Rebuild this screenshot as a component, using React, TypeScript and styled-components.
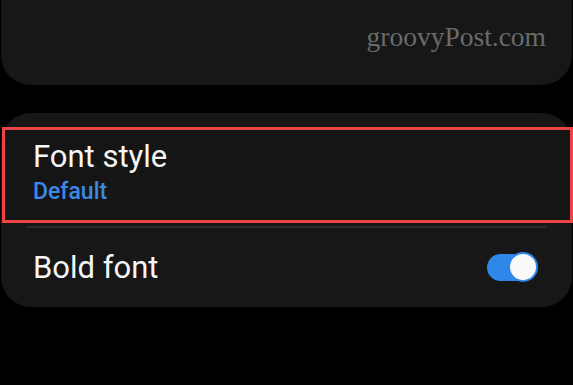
import styled, { createGlobalStyle } from "styled-components";

const GlobalStyle = createGlobalStyle`
  html, body {
    margin: 0;
    background: #000;
  }
  body {
    font-family: Roboto, "Noto Sans", sans-serif;
  }
`;

const Page = styled.div`
  width: 573px;
  height: 385px;
  padding: 0 1px;
  box-sizing: border-box;
  background: #000;
  overflow: hidden;
`;

const TopCard = styled.div`
  height: 85px;
  box-sizing: border-box;
  background: #171717;
  border-radius: 0 0 30px 30px;
  display: flex;
  justify-content: flex-end;
  align-items: flex-start;
  padding: 22px 26px 0 0;
`;

const Watermark = styled.span`
  font-family: "Liberation Serif", serif;
  font-size: 27.5px;
  line-height: 30px;
  color: #6a6a6a;
`;

const SettingsCard = styled.div`
  margin-top: 28px;
  background: #171717;
  border-radius: 30px;
  padding-top: 14px;
  display: flex;
  flex-direction: column;
`;

const Row = styled.div<{ $highlight?: boolean }>`
  display: flex;
  align-items: center;
  justify-content: space-between;
  box-sizing: border-box;
  margin: 0 -1px 0 1px;
  padding: ${(p) => (p.$highlight ? "8px 30px 15px 28px" : "0 38px 0 31px")};
  border: ${(p) => (p.$highlight ? "3px solid #ef4444" : "none")};
  background: ${(p) => (p.$highlight ? "#151515" : "transparent")};
  height: ${(p) => (p.$highlight ? "96px" : "79px")};
`;

const TextBlock = styled.div`
  display: flex;
  flex-direction: column;
  gap: 3px;
`;

const Title = styled.div`
  font-size: 31px;
  line-height: 36px;
  font-weight: 400;
  color: #f5f5f5;
`;

const Subtitle = styled.div`
  font-size: 23px;
  line-height: 27px;
  font-weight: 500;
  color: #3a89e6;
`;

const Divider = styled.div`
  height: 2px;
  margin: 3px 25px 0 26px;
  background: #2c2c2e;
`;

const Toggle = styled.div<{ $on: boolean }>`
  position: relative;
  width: 48px;
  height: 27px;
  border-radius: 14px;
  background: ${(p) => (p.$on ? "#2f87ea" : "#555")};
`;

const Knob = styled.div<{ $on: boolean }>`
  position: absolute;
  top: -2px;
  ${(p) => (p.$on ? "right: -3px;" : "left: -3px;")}
  width: 30px;
  height: 30px;
  box-sizing: border-box;
  border-radius: 50%;
  background: #fafafa;
  border: 2px solid #2f87ea;
`;

export default function App() {
  return (
    <Page>
      <GlobalStyle />
      <TopCard>
        <Watermark>groovyPost.com</Watermark>
      </TopCard>
      <SettingsCard>
        <Row $highlight>
          <TextBlock>
            <Title>Font style</Title>
            <Subtitle>Default</Subtitle>
          </TextBlock>
        </Row>
        <Divider />
        <Row>
          <Title>Bold font</Title>
          <Toggle $on>
            <Knob $on />
          </Toggle>
        </Row>
      </SettingsCard>
    </Page>
  );
}
